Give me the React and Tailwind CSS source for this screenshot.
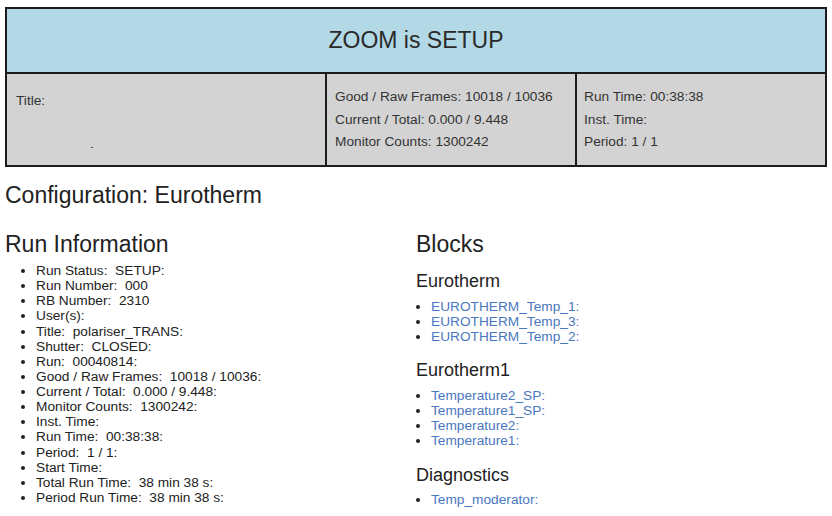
export default function App() {
  const runInfo = [
    "Run Status:  SETUP:",
    "Run Number:  000",
    "RB Number:  2310",
    "User(s):",
    "Title:  polariser_TRANS:",
    "Shutter:  CLOSED:",
    "Run:  00040814:",
    "Good / Raw Frames:  10018 / 10036:",
    "Current / Total:  0.000 / 9.448:",
    "Monitor Counts:  1300242:",
    "Inst. Time:",
    "Run Time:  00:38:38:",
    "Period:  1 / 1:",
    "Start Time:",
    "Total Run Time:  38 min 38 s:",
    "Period Run Time:  38 min 38 s:",
  ];
  const groups = [
    { name: "Eurotherm", mt: "mt-[14px]", items: ["EUROTHERM_Temp_1:", "EUROTHERM_Temp_3:", "EUROTHERM_Temp_2:"] },
    { name: "Eurotherm1", mt: "mt-[16px]", items: ["Temperature2_SP:", "Temperature1_SP:", "Temperature2:", "Temperature1:"] },
    { name: "Diagnostics", mt: "mt-[17px]", items: ["Temp_moderator:"] },
  ];
  return (
    <div className="w-[832px] h-[516px] overflow-hidden bg-white px-[5px] pt-[7px] text-[#222]" style={{ fontFamily: '"Liberation Sans", Arial, sans-serif' }}>
      <div className="border-2 border-[#1c1c1c] h-[160px] flex flex-col">
        <div className="h-[63px] bg-[#b3d9e6] flex items-center justify-center text-[23px] leading-none text-[#2a2a2a] border-b-2 border-[#1c1c1c] box-content">
          ZOOM is SETUP
        </div>
        <div className="flex-1 grid grid-cols-[318px_250px_1fr] bg-[#d3d3d3] text-[13.7px] text-[#333]">
          <div className="pl-[9px] pt-[16px] leading-[22.5px]">
            <div>Title:</div>
            <div className="ml-[75px] mt-[34px] w-[2px] h-[1px] bg-[#555]"></div>
          </div>
          <div className="border-l-2 border-[#1c1c1c] pl-[8px] flex flex-col justify-center leading-[22.5px] pt-[1px]">
            <div>Good / Raw Frames: 10018 / 10036</div>
            <div>Current / Total: 0.000 / 9.448</div>
            <div>Monitor Counts: 1300242</div>
          </div>
          <div className="border-l-2 border-[#1c1c1c] pl-[7px] flex flex-col justify-center leading-[22.5px] pt-[1px]">
            <div>Run Time: 00:38:38</div>
            <div>Inst. Time:</div>
            <div>Period: 1 / 1</div>
          </div>
        </div>
      </div>

      <h1 className="mt-[15px] text-[23px] leading-[26px]">Configuration: Eurotherm</h1>

      <div className="mt-[23px] grid grid-cols-2">
        <div>
          <h2 className="text-[23px] leading-[26px]">Run Information</h2>
          <ul className="mt-[6px] list-disc pl-[31px] text-[13.7px] leading-[15.13px]">
            {runInfo.map((t) => (
              <li key={t} className="whitespace-pre">{t}</li>
            ))}
          </ul>
        </div>
        <div>
          <h2 className="text-[23px] leading-[26px]">Blocks</h2>
          {groups.map((g, i) => (
            <div key={g.name}>
              <h3 className={`${g.mt} text-[18px] leading-[21px]`}>{g.name}</h3>
              <ul className={`${i === 2 ? "mt-[6px]" : "mt-[7px]"} list-disc pl-[15px] text-[13.7px] leading-[15px]`}>
                {g.items.map((t) => (
                  <li key={t}><span className="text-[#4a78c0]">{t}</span></li>
                ))}
              </ul>
            </div>
          ))}
        </div>
      </div>
    </div>
  );
}
